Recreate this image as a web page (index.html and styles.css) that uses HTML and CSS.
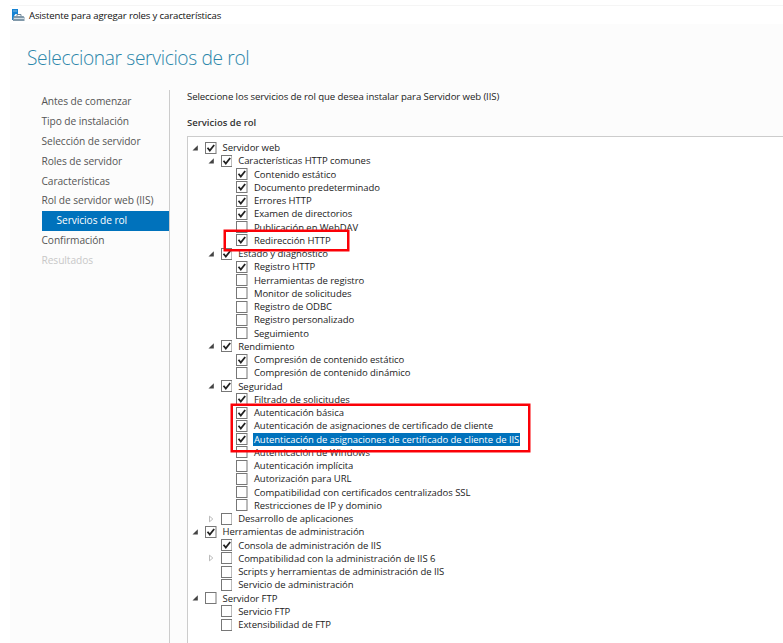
FILE: index.html
```html
<!DOCTYPE html>
<html lang="es">
<head>
<meta charset="utf-8">
<title>Asistente para agregar roles y características</title>
<link rel="stylesheet" href="styles.css">
</head>
<body>
<div class="window">
  <header class="titlebar">
    <svg class="app-icon" width="13" height="13" viewBox="0 0 13 13"><path fill="#1683d3" d="M0 0h6v5H3.5L2 7v4H0z"/><path fill="#83b9df" d="M1 1.5h4v1H1z"/><path fill="none" stroke="#71889a" d="M5 7V5.5h4V7"/><path fill="#8199aa" d="M2 7h9.5l1 1.5V12H1V9z"/><path fill="#d2dee6" d="M2 9h10v1H2z"/></svg>
    <span class="window-title">Asistente para agregar roles y características</span>
  </header>
  <div class="wizard">
    <h1>Seleccionar servicios de rol</h1>
    <div class="columns">
      <nav class="steps">
        <div>Antes de comenzar</div>
        <div>Tipo de instalación</div>
        <div>Selección de servidor</div>
        <div>Roles de servidor</div>
        <div>Características</div>
        <div>Rol de servidor web (IIS)</div>
        <div class="current">Servicios de rol</div>
        <div>Confirmación</div>
        <div class="disabled">Resultados</div>
      </nav>
      <main>
        <p class="intro">Seleccione los servicios de rol que desea instalar para Servidor web (IIS)</p>
        <h2>Servicios de rol</h2>
        <div class="tree" id="tree"></div>
      </main>
    </div>
  </div>
  <div class="mark mark-redirect"></div>
  <div class="mark mark-auth"></div>
</div>
<script src="tree.js"></script>
</body>
</html>
```
FILE: styles.css
```css
* { box-sizing: border-box; }
body { margin: 0; background: #fff; font-family: "Open Sans", "Noto Sans", sans-serif; color: #222; }
.window { position: relative; width: 783px; height: 643px; overflow: hidden; padding: 5px 0 0 10px; }
.titlebar { height: 19px; border-top: 1px solid #f5f5f5; display: flex; align-items: center; padding-left: 2px; gap: 4px; }
.app-icon { display: block; flex: none; }
.window-title { font-size: 9.6px; line-height: 18px; letter-spacing: -.15px; color: #111; white-space: nowrap; padding-top: 2px; }
.wizard { background: #fcfcfc; height: 619px; padding: 18px 0 0 17px; }
h1 { margin: 0; font-size: 19.2px; line-height: 32px; height: 32px; font-weight: 300; letter-spacing: -.36px; color: #2b86aa; white-space: nowrap; }
.columns { display: flex; padding-top: 16px; }
.steps { width: 143px; height: 553px; border-right: 1px solid #ccc; padding: 2px 0 0 14.5px; font-size: 10.2px; line-height: 19.9px; color: #555; white-space: nowrap; letter-spacing: -.07px; }
.steps div { height: 19.9px; }
.steps .current { background: #0072bc; color: #fff; padding-left: 15px; width: 127px; }
.steps .disabled { color: #c8c8c8; }
main { flex: 1; padding-left: 17px; }
.intro { margin: 0; font-size: 9.6px; line-height: 14px; letter-spacing: -.09px; white-space: nowrap; }
h2 { margin: 12px 0 0; font-size: 9.5px; line-height: 14px; letter-spacing: 0; font-weight: 600; color: #333; }
.tree { margin-top: 6px; height: 510px; border: 1px solid #ccc; border-right: 0; background: #fff; padding-top: 4px; font-size: 9.5px; letter-spacing: -.04px; }
.row { display: flex; align-items: center; height: 13.26px; line-height: 13.26px; white-space: nowrap; padding-left: 4px; }
.level-1 { padding-left: 19.7px; }
.level-2 { padding-left: 35.4px; }
.arrow { width: 6px; height: 8px; flex: none; margin-right: 7px; }
.check { width: 11.5px; height: 12px; flex: none; margin-right: 5px; }
.label { padding: 0 1px; height: 13px; line-height: 13px; }
.selected .label { background: #0072bc; color: #fff; }
.mark { position: absolute; border: 2px solid #fb0007; box-shadow: 0 0 0 .5px #fb0007; }
.mark-redirect { left: 224px; top: 230px; width: 125px; height: 21px; }
.mark-auth { left: 231px; top: 404px; width: 299px; height: 48px; }
```
FILE: tree.js
```js
// Each entry: level, checked, arrow (open, closed or none), label
const roles = [
  [0, 1, 'o', 'Servidor web'],
  [1, 1, 'o', 'Características HTTP comunes'],
  [2, 1, '', 'Contenido estático'],
  [2, 1, '', 'Documento predeterminado'],
  [2, 1, '', 'Errores HTTP'],
  [2, 1, '', 'Examen de directorios'],
  [2, 0, '', 'Publicación en WebDAV'],
  [2, 1, '', 'Redirección HTTP'],
  [1, 1, 'o', 'Estado y diagnóstico'],
  [2, 1, '', 'Registro HTTP'],
  [2, 0, '', 'Herramientas de registro'],
  [2, 0, '', 'Monitor de solicitudes'],
  [2, 0, '', 'Registro de ODBC'],
  [2, 0, '', 'Registro personalizado'],
  [2, 0, '', 'Seguimiento'],
  [1, 1, 'o', 'Rendimiento'],
  [2, 1, '', 'Compresión de contenido estático'],
  [2, 0, '', 'Compresión de contenido dinámico'],
  [1, 1, 'o', 'Seguridad'],
  [2, 1, '', 'Filtrado de solicitudes'],
  [2, 1, '', 'Autenticación básica'],
  [2, 1, '', 'Autenticación de asignaciones de certificado de cliente'],
  [2, 1, '', 'Autenticación de asignaciones de certificado de cliente de IIS', 'selected'],
  [2, 0, '', 'Autenticación de Windows'],
  [2, 0, '', 'Autenticación implícita'],
  [2, 0, '', 'Autorización para URL'],
  [2, 0, '', 'Compatibilidad con certificados centralizados SSL'],
  [2, 0, '', 'Restricciones de IP y dominio'],
  [1, 0, 'c', 'Desarrollo de aplicaciones'],
  [0, 1, 'o', 'Herramientas de administración'],
  [1, 1, '', 'Consola de administración de IIS'],
  [1, 0, 'c', 'Compatibilidad con la administración de IIS 6'],
  [1, 0, '', 'Scripts y herramientas de administración de IIS'],
  [1, 0, '', 'Servicio de administración'],
  [0, 0, 'o', 'Servidor FTP'],
  [1, 0, '', 'Servicio FTP'],
  [1, 0, '', 'Extensibilidad de FTP']
];
const arrows = {
  o: '<path d="M5.8 1.2v5.3H.5z" fill="#444"/>',
  c: '<path d="M1.5 1.2v5.6L4.8 4z" fill="#fff" stroke="#aaa" stroke-width=".8"/>',
  '': ''
};
document.getElementById('tree').innerHTML = roles.map(([level, on, arrow, label, state = '']) =>
  `<div class="row level-${level} ${state}">
    <svg class="arrow" viewBox="0 0 6 8">${arrows[arrow]}</svg>
    <svg class="check" viewBox="0 0 11.5 12"><rect x=".5" y=".5" width="10.5" height="11" fill="#fff" stroke="#777"/>${on ? '<path d="M2.5 5.8l2.3 2.8L9.2 3" fill="none" stroke="#222" stroke-width="1.8"/>' : ''}</svg>
    <span class="label">${label}</span>
  </div>`).join('');
```
